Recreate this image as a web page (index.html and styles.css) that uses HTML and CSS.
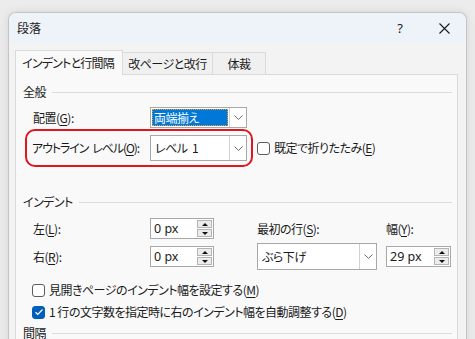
FILE: index.html
```html
<!DOCTYPE html>
<html lang="ja">
<head>
<meta charset="utf-8">
<title>段落</title>
<link rel="stylesheet" href="styles.css">
</head>
<body>
<div class="dialog">
  <div class="titlebar">
    <span class="title">段落</span>
    <div class="tbtns">
      <span class="tbtn help">?</span>
      <span class="tbtn close"><svg width="11" height="11" viewBox="0 0 11 11"><path d="M0.5 0.5L10.5 10.5M10.5 0.5L0.5 10.5" stroke="#1a1a1a" stroke-width="1.1" fill="none"/></svg></span>
    </div>
  </div>
  <div class="tabs">
    <div class="tab active">インデントと行間隔</div>
    <div class="tab t2">改ページと改行</div>
    <div class="tab t3">体裁</div>
  </div>
  <div class="panel">
    <div class="group-head g1"><span>全般</span><i class="rule"></i></div>

    <div class="row r-align">
      <span class="lbl w117">配置(<u>G</u>):</span>
      <div class="combo c1">
        <span class="val"><span class="sel">両端揃え</span></span>
        <span class="arrow"><svg width="9" height="5" viewBox="0 0 9 5"><path d="M0.5 0.5L4.5 4.5L8.5 0.5" stroke="#6b6b6b" fill="none" stroke-width="1"/></svg></span>
      </div>
    </div>

    <div class="row r-outline">
      <div class="hl">
        <span class="lbl w118 tight">アウトライン<span class="gap"></span>レベル(<u>O</u>):</span>
        <div class="combo c2">
          <span class="val txt">レベル&nbsp;&nbsp;1</span>
          <span class="arrow"><svg width="9" height="5" viewBox="0 0 9 5"><path d="M0.5 0.5L4.5 4.5L8.5 0.5" stroke="#6b6b6b" fill="none" stroke-width="1"/></svg></span>
        </div>
      </div>
      <div class="chk"><span class="box"></span><span class="lbl">既定で折りたたみ(<u>E</u>)</span></div>
    </div>

    <div class="group-head g2"><span>インデント</span><i class="rule"></i></div>

    <div class="indent-grid">
      <span class="lbl">左(<u>L</u>):</span>
      <div class="spin s64">
        <span class="stxt">0 px</span>
        <span class="sbtns"><span class="sb up"><i></i></span><span class="sb dn"><i></i></span></span>
      </div>
      <span class="lbl">最初の行(<u>S</u>):</span>
      <span class="lbl">幅(<u>Y</u>):</span>

      <span class="lbl">右(<u>R</u>):</span>
      <div class="spin s64">
        <span class="stxt">0 px</span>
        <span class="sbtns"><span class="sb up"><i></i></span><span class="sb dn"><i></i></span></span>
      </div>
      <div class="combo c3">
        <span class="val txt">ぶら下げ</span>
        <span class="arrow"><svg width="9" height="5" viewBox="0 0 9 5"><path d="M0.5 0.5L4.5 4.5L8.5 0.5" stroke="#6b6b6b" fill="none" stroke-width="1"/></svg></span>
      </div>
      <div class="spin s65">
        <span class="stxt">29 px</span>
        <span class="sbtns"><span class="sb up"><i></i></span><span class="sb dn"><i></i></span></span>
      </div>
    </div>

    <div class="chk crow c-1"><span class="box"></span><span class="lbl">見開きページのインデント幅を設定する(<u>M</u>)</span></div>
    <div class="chk crow c-2"><span class="box on"><svg width="10" height="8" viewBox="0 0 10 8"><path d="M1.5 4.2L3.8 6.3L8.5 1.5" stroke="#fff" stroke-width="1.2" fill="none"/></svg></span><span class="lbl">1&nbsp;行の文字数を指定時に右のインデント幅を自動調整する(<u>D</u>)</span></div>

    <div class="group-head g3"><span>間隔</span><i class="rule"></i></div>
  </div>
</div>
</body>
</html>
```

FILE: styles.css
```css
html, body {
  margin: 0;
  padding: 0;
}
body {
  background: #ececec;
  width: 475px;
  height: 339px;
  overflow: hidden;
  font-family: "Noto Sans CJK JP", "Noto Sans", sans-serif;
  font-size: 12px;
  font-feature-settings: "palt";
  letter-spacing: -0.5px;
  color: #1a1a1a;
}
u {
  text-decoration: underline;
  text-underline-offset: 2px;
  text-decoration-thickness: 1px;
}
.dialog {
  margin: 12px 0 0 8px;
  width: 459px;
  height: 340px;
  box-sizing: border-box;
  border: 1px solid #c4c4c4;
  border-bottom: none;
  border-radius: 8px 8px 0 0;
  background: #f3f3f3;
  box-shadow: 0 0 10px rgba(0,0,0,0.10);
  overflow: hidden;
}
.titlebar {
  height: 30px;
  background: #eef2f9;
  display: flex;
  align-items: center;
  padding-left: 8px;
}
.title {
  line-height: 16px;
  flex: 1;
  letter-spacing: 0;
}
.tbtns {
  display: flex;
  height: 30px;
}
.tbtn {
  width: 44px;
  height: 30px;
  display: flex;
  align-items: center;
  justify-content: center;
}
.help {
  font-family: "Noto Sans", sans-serif;
  font-size: 13px;
  letter-spacing: 0;
  color: #1a1a1a;
}
.tabs {
  margin: 7px 0 0 6px;
  height: 24px;
  display: flex;
  align-items: flex-end;
}
.tab {
  box-sizing: border-box;
  height: 22px;
  border: 1px solid #dadada;
  border-bottom: none;
  background: #f0f0f0;
  display: flex;
  align-items: center;
  justify-content: center;
  line-height: 16px;
}
.tab.active {
  height: 25px;
  width: 108px;
  margin-bottom: -1px;
  background: #f9f9f9;
  position: relative;
  z-index: 1;
  padding-right: 2px;
  letter-spacing: -0.8px;
}
.tab.t2 {
  width: 90px;
  border-left: none;
}
.tab.t3 {
  width: 53px;
  border-left: none;
}
.panel {
  margin: 0 8px 0 6px;
  height: 300px;
  box-sizing: border-box;
  border: 1px solid #dadada;
  background: #f9f9f9;
  padding: 9px 5px 0 0;
}
.group-head {
  display: flex;
  align-items: center;
  height: 16px;
  line-height: 16px;
  padding-left: 7px;
  color: #222;
}
.group-head .rule {
  flex: 1;
  height: 1px;
  background: #dcdcdc;
  margin-left: 6px;
}
.lbl {
  line-height: 16px;
  white-space: nowrap;
}
.tight { letter-spacing: -1.1px; }
.gap {
  display: inline-block;
  width: 4px;
}
.w117 { width: 117px; flex: none; }
.w118 { width: 118px; flex: none; }
.row {
  display: flex;
  align-items: center;
}
.r-align {
  margin-top: 7px;
  height: 21px;
  padding-left: 17px;
}
.r-outline {
  margin-top: 1px;
  padding-left: 9px;
}
.hl {
  box-sizing: border-box;
  height: 38px;
  display: flex;
  align-items: center;
  border: 2px solid #e0161f;
  border-radius: 10px;
  padding: 0 4px 0 5px;
}
.combo {
  box-sizing: border-box;
  display: flex;
  border: 1px solid #a8a8a8;
  background: #fff;
  flex: none;
}
.combo .val {
  flex: 1;
  display: flex;
  align-items: center;
  padding: 1px;
}
.combo .txt {
  padding-left: 4px;
  line-height: 16px;
}
.combo .sel {
  flex: 1;
  align-self: stretch;
  display: flex;
  align-items: center;
  background: #0078d7;
  color: #fff;
  outline: 1px dotted #f0a030;
  outline-offset: -1px;
  padding-left: 2px;
  line-height: 16px;
}
.combo .arrow {
  width: 16px;
  flex: none;
  border-left: 1px solid #d0d0d0;
  display: flex;
  align-items: center;
  justify-content: center;
  background: #fff;
}
.c1 { width: 97px; height: 21px; }
.c2 { width: 97px; height: 26px; }
.c3 { width: 120px; height: 27px; align-self: center; }
.chk {
  display: flex;
  align-items: center;
}
.r-outline .chk {
  margin-left: 4px;
}
.box {
  box-sizing: border-box;
  width: 13px;
  height: 13px;
  border: 1px solid #5c5c5c;
  border-radius: 3px;
  background: #fff;
  margin-right: 4px;
  flex: none;
  display: flex;
  align-items: center;
  justify-content: center;
}
.box.on {
  background: #005fb8;
  border-color: #005fb8;
}
.g2 {
  margin-top: 27px;
}
.indent-grid {
  margin-top: 8px;
  padding-left: 17px;
  display: grid;
  grid-template-columns: 117px 107px 129px 65px;
  grid-template-rows: 21px 21px;
  row-gap: 7px;
  align-items: center;
}
.spin {
  box-sizing: border-box;
  height: 21px;
  border: 1px solid #a8a8a8;
  background: #fff;
  display: flex;
  align-items: center;
}
.s64 { width: 64px; }
.s65 { width: 65px; height: 21px; }
.stxt {
  flex: 1;
  padding-left: 3px;
  line-height: 16px;
  font-family: "Noto Sans", sans-serif;
  font-size: 12.5px;
  letter-spacing: 0;
}
.sbtns {
  display: flex;
  flex-direction: column;
  width: 15px;
  margin-right: 1px;
  gap: 1px;
}
.sb {
  box-sizing: border-box;
  height: 8px;
  border: 1px solid #b4b4b4;
  background: #ececec;
  display: flex;
  align-items: center;
  justify-content: center;
}
.sb i {
  width: 0;
  height: 0;
  border-left: 3px solid transparent;
  border-right: 3px solid transparent;
}
.sb.up i { border-bottom: 3px solid #111; }
.sb.dn i { border-top: 3px solid #111; }
.crow {
  padding-left: 16px;
  height: 16px;
}
.c-1 { margin-top: 15px; }
.c-2 { margin-top: 6px; }
.g3 { margin-top: 5px; }
```
